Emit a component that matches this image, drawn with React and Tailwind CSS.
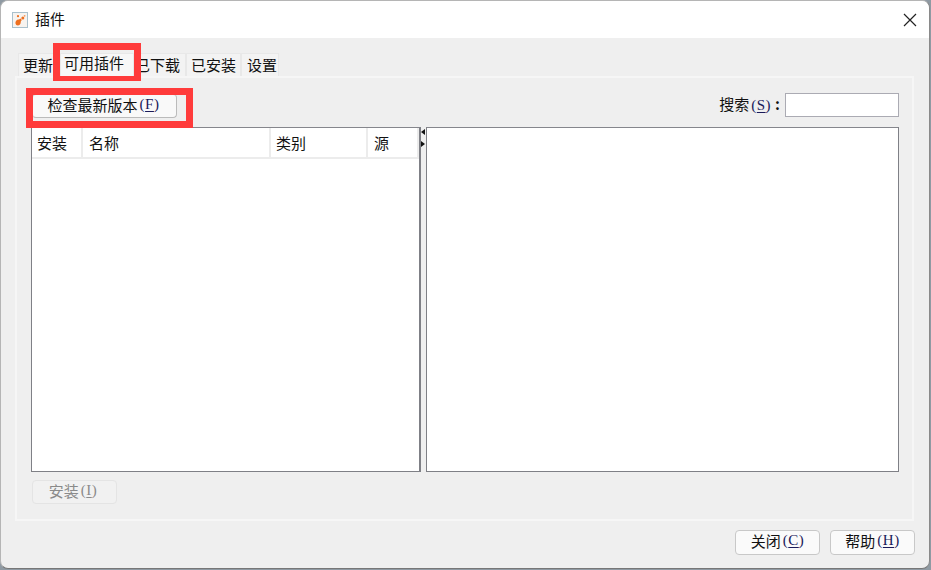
import React from 'react';

const font = { cjk: 'font-["Noto_Sans_CJK_SC",sans-serif]' };

function Key({ k }) {
  return (
    <span className='ml-[2px] font-["Liberation_Serif",serif] text-[15px] tracking-[0.5px] text-[#1a1a5a]'>
      (<span className="underline underline-offset-2">{k}</span>)
    </span>
  );
}

function Tab({ w, pl, active, children }) {
  return (
    <div
      className={
        'h-[23px] flex items-center border-t border-r border-l border-[#e8e8e8] ' +
        (active ? 'bg-[#f7f7f7] relative z-10 pb-[4px]' : 'bg-[#f3f3f3]')
      }
      style={{ width: w, paddingLeft: pl }}
    >
      {children}
    </div>
  );
}

function Head({ w, pl, children }) {
  return (
    <div className="h-[31px] shrink-0 flex items-center pt-[2px] border-r-[2px] border-b-[2px] border-[#ececec]" style={{ width: w, paddingLeft: pl }}>
      {children}
    </div>
  );
}

function FooterButton({ children }) {
  return (
    <button className="w-[85px] h-[25px] pb-[4px] flex items-center justify-center rounded-[4px] border border-[#c8c8c8] bg-[#fafafa] text-[15px] leading-none">
      {children}
    </button>
  );
}

export default function App() {
  return (
    <div className={'w-[931px] h-[570px] bg-[#8f9aa3] overflow-hidden text-[15px] text-[#111] ' + font.cjk}>
      <div className="relative w-[930px] h-[569px] flex flex-col bg-[#efefef] rounded-[8px] border border-[#b5b5b5] border-r-[#8a8a8a] border-b-[#777] overflow-hidden">
        {/* Title bar */}
        <div className="h-[37px] shrink-0 bg-white flex items-center pl-[11px] pr-[12px]">
          <svg width="16" height="16" viewBox="0 0 16 16" className="shrink-0">
            <rect x="0.5" y="0.5" width="15" height="15" fill="#f7f3ef" stroke="#a9c0cc" />
            <path d="M3.5 11.5C3 9 5 7.2 7 7.5L8.5 6.5 9.8 8 8.8 9.5C9 12 7.5 13.5 5.8 13.5 4.6 13.5 3.8 12.7 3.5 11.5Z" fill="#ee6f1f" />
            <circle cx="10.8" cy="6" r="1.5" fill="#ee6f1f" />
            <circle cx="6" cy="4.2" r="1.1" fill="#ee6f1f" />
            <circle cx="12.6" cy="3.8" r="0.9" fill="#f29a5c" />
          </svg>
          <span className="ml-[7px] text-[15px]">插件</span>
          <svg width="14" height="14" viewBox="0 0 14 14" className="ml-auto" stroke="#222" strokeWidth="1.2">
            <path d="M1 1 13 13M13 1 1 13" />
          </svg>
        </div>

        {/* Tabs */}
        <div className="mt-[15px] ml-[17px] flex h-[23px] shrink-0">
          <Tab w={42} pl={4}>更新</Tab>
          <Tab w={74} pl={3} active>可用插件</Tab>
          <Tab w={52} pl={0}>已下载</Tab>
          <Tab w={55} pl={4}>已安装</Tab>
          <Tab w={38} pl={5}>设置</Tab>
        </div>

        {/* Panel */}
        <div className="ml-[14px] w-[899px] h-[445px] shrink-0 border-2 border-[#f6f6f6] bg-[#efefef] flex flex-col pl-[14px] pr-[13px]">
          <div className="mt-[15px] h-[25px] flex items-start justify-between shrink-0">
            <button className="mt-px ml-px w-[145px] h-[24px] pb-[4px] pr-[2px] flex items-center justify-center rounded-[4px] border border-[#d0d0d0] border-b-[#bbb] border-r-[#bbb] bg-[#f9f9f9] text-[15px] leading-none">
              检查最新版本<Key k="F" />
            </button>
            <div className="flex items-center pb-px">
              <span className="-mt-px">搜索</span>
              <span className="-mt-px"><Key k="S" /></span>
              <span className="ml-[4px] mr-[5px] font-bold -mt-px">:</span>
              <div className="w-[114px] h-[24px] bg-white border border-[#ababb3]" />
            </div>
          </div>

          <div className="mt-[9px] flex h-[345px] shrink-0">
            {/* Left table */}
            <div className="w-[390px] bg-white border border-[#7f8086] border-r-2 border-t-[#85868c]">
              <div className="flex">
                <Head w={51} pl={5}>安装</Head>
                <Head w={188} pl={6}>名称</Head>
                <Head w={97} pl={5}>类别</Head>
                <Head w={51} pl={6}>源</Head>
              </div>
            </div>
            {/* Splitter */}
            <div className="w-[5px] flex flex-col items-start">
              <svg width="4" height="30" viewBox="0 0 4 30" className="mt-[2px]">
                <path d="M0 3 4 0V6Z" fill="#111" />
                <path d="M0 12V18L4 15Z" fill="#111" />
              </svg>
            </div>
            {/* Right detail pane */}
            <div className="w-[473px] bg-white border border-[#7f8086] border-t-[#85868c]" />
          </div>

          <button disabled className="mt-[8px] ml-px w-[85px] h-[24px] pb-[3px] pr-[3px] shrink-0 flex items-center justify-center rounded-[4px] border border-[#e4e4e4] bg-[#f1f1f1] text-[15px] leading-none text-[#8a8a8a]">
            安装<span className='ml-[2px] font-["Liberation_Serif",serif] text-[15px] tracking-[0.5px]'>(<span className="underline underline-offset-2">I</span>)</span>
          </button>
        </div>

        {/* Footer */}
        <div className="mt-[9px] flex justify-end gap-[10px] pr-[14px]">
          <FooterButton>关闭<Key k="C" /></FooterButton>
          <FooterButton>帮助<Key k="H" /></FooterButton>
        </div>

        {/* Red annotation boxes */}
        <div className="absolute left-[52px] top-[42px] w-[88px] h-[38px] border-[7px] border-b-[6px] border-[#ff3b3b]" />
        <div className="absolute left-[25px] top-[87px] w-[167px] h-[40px] border-[7px] border-[#ff3b3b]" />
      </div>
    </div>
  );
}
